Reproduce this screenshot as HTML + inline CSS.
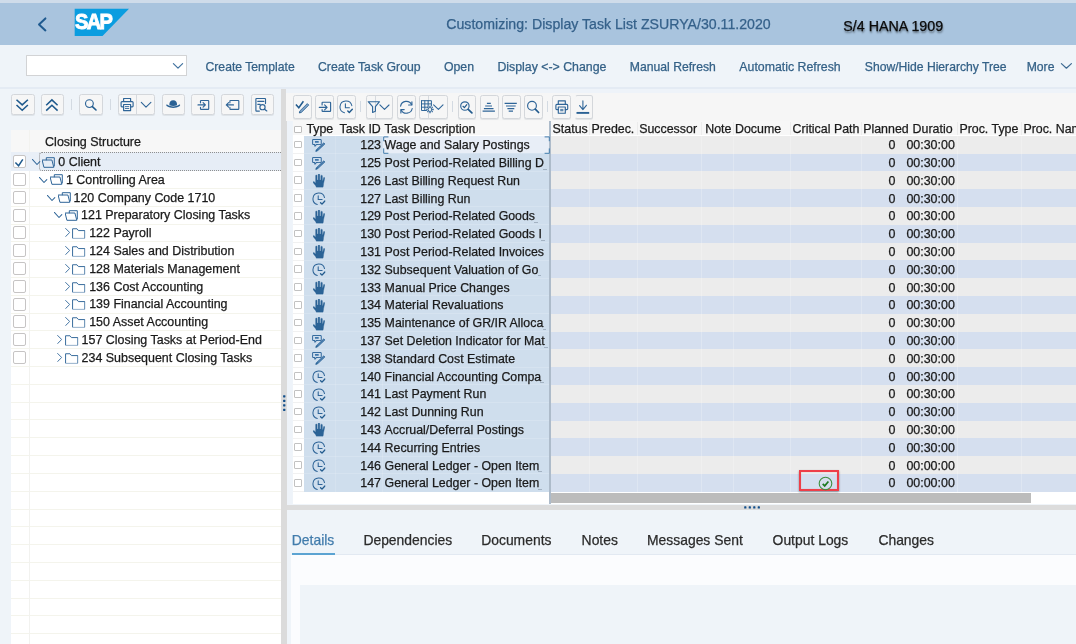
<!DOCTYPE html>
<html><head><meta charset="utf-8"><title>SAP</title>
<style>
html,body{margin:0;padding:0;overflow:hidden}
body{width:1076px;height:644px;overflow:hidden;position:relative;background:#eff4f9;font-family:"Liberation Sans",sans-serif;}
.b{position:absolute;display:block}
svg{overflow:visible}
.t{position:absolute;white-space:nowrap;line-height:20px;height:20px;-webkit-text-stroke:0.250px currentColor}
.btn{position:absolute;box-sizing:border-box;background:#f6f6f6;border:1px solid #d4d7db;border-radius:2.500px;box-shadow:0 1px 0 rgba(170,178,186,.25)}
.ic{fill:none;stroke:#2f6598;stroke-width:1.150;stroke-linecap:round;stroke-linejoin:round}
.if{fill:#2f6598;stroke:none}
#w{position:absolute;left:0;top:0;width:1076px;height:644px;overflow:hidden;will-change:transform}
</style></head><body><div id="w">
<svg width="0" height="0" style="position:absolute"><defs>
<linearGradient id="sapg" x1="0" y1="0" x2="0" y2="1"><stop offset="0" stop-color="#1aa6e4"/><stop offset="1" stop-color="#0d7fc9"/></linearGradient>
<symbol id="fopen" viewBox="0 0 13 11"><path class="ic" style="stroke-width:1;stroke-linejoin:miter" d="M4.300 2.900V0.700H12.300V9M0.500 3H9.900L11.800 10.300H2.300z"/></symbol>
<symbol id="fclosed" viewBox="0 0 14 11"><path class="ic" style="stroke-width:1;stroke-linejoin:miter" d="M0.600 10.400V0.700h4.600l1.500 1.900h6.700v7.800z"/></symbol>
<symbol id="chd" viewBox="0 0 9 6"><path class="ic" style="stroke-width:1.050" d="M0.300 0.300L5 5.500L7.800 2.600"/></symbol>
<symbol id="chr" viewBox="0 0 6 10"><path class="ic" style="stroke-width:1" d="M0.700 0.500l4.500 4.500-4.500 4.500"/></symbol>
<symbol id="clock" viewBox="0 0 14 14"><path class="ic" style="stroke-width:1.050" d="M12.870 5.750A6 6 0 1 0 5.450 12.800"/><path class="ic" style="stroke-width:1.100;stroke-linejoin:miter" d="M6.400 3.800V7.700H10.400"/><path class="ic" style="stroke-width:1.400;stroke:#215a8d" d="M8.800 11l1.500 1.500 3-3.300"/></symbol>
<symbol id="hand" viewBox="0 0 12 13.500"><path d="M2.600 9.200V1.700a0.750 0.750 0 0 1 1.500 0V6H5.100V0.800a0.850 0.850 0 0 1 1.700 0V6H7.800V2a0.800 0.800 0 0 1 1.600 0V6.400L9.900 6.600L10.500 3.900a0.650 0.650 0 0 1 1.300 0.300L10.600 9.500C10.500 11.200 10.300 12.400 10 13.400H3.400C3.100 12.200 2.400 11.200 1.600 10.400L0.200 8.700C-0.300 7.900 0.600 7.100 1.300 7.700z" fill="#2b6396" stroke="#2b6396" stroke-width="0.300" stroke-linejoin="round"/></symbol>
<symbol id="cpen" viewBox="0 0 14 13"><path class="ic" style="stroke-width:1.050;stroke:#366c9f" d="M6.600 5.500H4.600L3 7.400L2.700 5.500H1.400c-0.500 0-0.800-0.300-0.800-0.800V1.300c0-0.500 0.300-0.800 0.800-0.800h7.200c0.500 0 0.800 0.300 0.800 0.800v3.400c0 0.500-0.300 0.800-0.800 0.800H7.600"/><path d="M3 2.100h3.800v1.600H3z" fill="#3f76aa"/><path d="M12 3.900l1.100 1.200-7.600 7-1.700 0.600 0.500-1.700z" fill="#3a73a8" stroke="#2b6396" stroke-width="0.700" stroke-linejoin="round"/><path d="M11.600 5.400L5.700 10.900" fill="none" stroke="#c9d9ea" stroke-width="0.550" stroke-dasharray="0.700 0.900"/><path d="M3.700 12.800l0.450-1.500 1.050 1.050z" fill="#1f5a8d"/></symbol>
</defs></svg>
<div class="b" style="left:0.00px;top:0.00px;width:1076.00px;height:3.00px;background:#cfdcea;"></div>
<div class="b" style="left:0.00px;top:3.00px;width:1076.00px;height:42.00px;background:#a9c4de;"></div>
<svg class="b" style="left:34.00px;top:14.00px;" width="16" height="20" viewBox="0 0 16 20"><path d="M11.4 4.400L5 10.400l6.400 6" fill="none" stroke="#1f5a8f" stroke-width="2" stroke-linecap="round" stroke-linejoin="round"/></svg>
<svg class="b" style="left:74.00px;top:8.00px;" width="56" height="29" viewBox="0 0 56 29"><path d="M0.700 0.700H55L28.500 27.900H0.700z" fill="#0a9de0"/><text transform="translate(0.900 21.100) scale(0.900 1)" font-family="Liberation Sans" font-weight="bold" font-size="22.300" fill="#fff" stroke="#fff" stroke-width="0.900" style="letter-spacing:-1.800px">SAP</text></svg>
<div class="t" style="left:446.30px;top:14.10px;font-size:14.15px;color:#35618a;">Customizing: Display Task List ZSURYA/30.11.2020</div>
<div class="t" style="left:843.30px;top:15.60px;font-size:14.25px;color:#0a0a0a;text-shadow:0.500px 1.500px 2px rgba(0,0,0,.45)">S/4 HANA 1909</div>
<div class="b" style="left:26.300px;top:55.200px;width:158.400px;height:18.800px;background:#fff;border:1px solid #d2d3d5;border-radius:0.500px"></div>
<svg class="b" style="left:171.60px;top:61.30px;" width="12" height="10" viewBox="0 0 12 10"><path class="ic" style="stroke-width:1.200;stroke:#41729f" d="M1.400 2.600l4.600 4.600 4.600-4.600"/></svg>
<div class="t" style="left:205.50px;top:57.20px;font-size:12.2px;color:#346187;">Create Template</div>
<div class="t" style="left:318.00px;top:57.20px;font-size:12.25px;color:#346187;">Create Task Group</div>
<div class="t" style="left:443.90px;top:57.20px;font-size:12.3px;color:#346187;">Open</div>
<div class="t" style="left:497.40px;top:57.20px;font-size:12.33px;color:#346187;">Display &lt;-&gt; Change</div>
<div class="t" style="left:629.80px;top:57.20px;font-size:12.2px;color:#346187;">Manual Refresh</div>
<div class="t" style="left:739.30px;top:57.20px;font-size:12.33px;color:#346187;">Automatic Refresh</div>
<div class="t" style="left:864.80px;top:57.20px;font-size:12.15px;color:#346187;">Show/Hide Hierarchy Tree</div>
<div class="t" style="left:1026.70px;top:57.20px;font-size:12.2px;color:#346187;">More</div>
<svg class="b" style="left:1060.00px;top:61.00px;" width="13" height="10" viewBox="0 0 13 10"><path class="ic" style="stroke-width:1.2;stroke:#3e6a92" d="M1.400 2.600l5 4.600 5-4.600"/></svg>
<div class="b" style="left:0.00px;top:87.00px;width:1076.00px;height:1.50px;background:#e4ebf4;"></div>
<div class="btn" style="left:10.90px;top:94.20px;width:23.70px;height:21.20px;"></div>
<div class="btn" style="left:40.60px;top:94.20px;width:23.80px;height:21.20px;"></div>
<div class="btn" style="left:79.20px;top:94.20px;width:23.60px;height:21.20px;"></div>
<div class="btn" style="left:118.10px;top:94.20px;width:37.20px;height:21.20px;"></div>
<div class="btn" style="left:161.80px;top:94.20px;width:23.40px;height:21.20px;"></div>
<div class="btn" style="left:191.20px;top:94.20px;width:23.60px;height:21.20px;"></div>
<div class="btn" style="left:220.90px;top:94.20px;width:23.50px;height:21.20px;"></div>
<div class="btn" style="left:250.80px;top:94.20px;width:23.70px;height:21.20px;"></div>
<div class="b" style="left:136.20px;top:95.20px;width:1.00px;height:19.20px;background:#d5d9de;"></div>
<div class="b" style="left:71.30px;top:99.20px;width:1.00px;height:11.00px;background:#d3dae2;"></div>
<div class="b" style="left:110.30px;top:99.20px;width:1.00px;height:11.00px;background:#d3dae2;"></div>
<svg class="b" style="left:8px;top:92px" width="272" height="28" viewBox="8 92 272 28"><path class="ic" style="stroke-width:1.550;stroke:#1f5a8d;stroke-linecap:butt;stroke-linejoin:miter" d="M16.500 99.700L22.200 104.900L27.900 99.700M16.500 105L22.200 110.300L27.900 105"/><path class="ic" style="stroke-width:1.550;stroke:#1f5a8d;stroke-linecap:butt;stroke-linejoin:miter" d="M46.200 105.300L51.900 99.900L57.600 105.300M46.200 110.600L51.900 105.200L57.600 110.600"/><circle class="ic" cx="89.400" cy="103.600" r="3.900"/><path class="ic" style="stroke-width:1.600;stroke:#1f5a8d" d="M92.400 106.600L96 110"/><path class="ic" d="M123.600 101.600V98.500H130.600V101.600M123.600 106.900H122Q121.100 106.900 121.100 106V102.600Q121.100 101.600 122 101.600H132.200Q133.100 101.600 133.100 102.600V106Q133.100 106.900 132.200 106.900H130.600"/><path class="ic" d="M123.600 104.500H130.600V110.600H123.600z"/><path class="ic" style="stroke-width:0.900" d="M125.400 106.600H128.800M125.400 108.500H128.800"/><path class="ic" style="stroke-width:1.100" d="M141.300 102.400L146 107.200L150.900 102.400"/><path class="if" style="fill:#2a6194" d="M169.400 105.300C169.100 101.800 170.700 100.200 173.200 100.200S177.300 101.800 177 105.300C174.600 106.200 171.800 106.200 169.400 105.300z"/><path class="if" style="fill:#2a6194" d="M166.300 104.800C166.500 104.300 167.100 104.400 167.400 104.700C170.900 107 175.500 107 179 104.700C179.300 104.400 179.900 104.300 180.100 104.800C180.300 105.400 179.900 105.900 179.400 106.300C175.600 108.600 170.800 108.600 167 106.300C166.500 105.900 166.100 105.400 166.300 104.800z"/><path class="ic" d="M200.500 102.800V101.100Q200.500 100.500 201.100 100.500H208.100Q208.700 100.500 208.700 101.100V108.800Q208.700 109.400 208.100 109.400H201.100Q200.500 109.400 200.500 108.800V107.200"/><path class="ic" d="M198 104.900H205.300M203.100 102.600L205.400 104.900L203.100 107.200"/><path class="ic" d="M229.900 102.800V101.100Q229.900 100.500 230.500 100.500H238.200Q238.800 100.500 238.800 101.100V108.800Q238.800 109.400 238.200 109.400H230.500Q229.900 109.400 229.900 108.800V107.200"/><path class="ic" d="M226.300 104.900H233.500M228.600 102.600L226.300 104.900L228.600 107.200"/><path class="ic" d="M259.400 111.100H256.500Q255.900 111.100 255.900 110.500V99.100Q255.900 98.500 256.500 98.500H264.900Q265.500 98.500 265.500 99.100V103.600M257.800 101.400H263.800M257.800 104.300H260.200"/><circle class="ic" cx="262.500" cy="107.200" r="2.600"/><path class="ic" style="stroke-width:1.300" d="M264.500 109.200L266.800 110.900"/></svg>
<div class="b" style="left:11.00px;top:130.40px;width:270.00px;height:513.60px;background:#fff;"></div>
<div class="b" style="left:11.00px;top:130.40px;width:270.00px;height:22.35px;background:#f7f7f7;"></div>
<div class="t" style="left:45.10px;top:132.30px;font-size:12.5px;color:#1a1a1a;">Closing Structure</div>
<div class="b" style="left:11.00px;top:152.25px;width:270.00px;height:1.00px;background:#ebebeb;"></div>
<div class="b" style="left:11.00px;top:170.06px;width:270.00px;height:1.00px;background:#ebebeb;"></div>
<div class="b" style="left:11.00px;top:187.88px;width:270.00px;height:1.00px;background:#f4f4ec;"></div>
<div class="b" style="left:11.00px;top:205.69px;width:270.00px;height:1.00px;background:#f4f4ec;"></div>
<div class="b" style="left:11.00px;top:223.51px;width:270.00px;height:1.00px;background:#f4f4ec;"></div>
<div class="b" style="left:11.00px;top:241.32px;width:270.00px;height:1.00px;background:#f4f4ec;"></div>
<div class="b" style="left:11.00px;top:259.14px;width:270.00px;height:1.00px;background:#f4f4ec;"></div>
<div class="b" style="left:11.00px;top:276.96px;width:270.00px;height:1.00px;background:#f4f4ec;"></div>
<div class="b" style="left:11.00px;top:294.77px;width:270.00px;height:1.00px;background:#f4f4ec;"></div>
<div class="b" style="left:11.00px;top:312.59px;width:270.00px;height:1.00px;background:#f4f4ec;"></div>
<div class="b" style="left:11.00px;top:330.40px;width:270.00px;height:1.00px;background:#f4f4ec;"></div>
<div class="b" style="left:11.00px;top:348.22px;width:270.00px;height:1.00px;background:#f4f4ec;"></div>
<div class="b" style="left:11.00px;top:366.03px;width:270.00px;height:1.00px;background:#f4f4ec;"></div>
<div class="b" style="left:11.00px;top:383.85px;width:270.00px;height:1.00px;background:#f4f4ec;"></div>
<div class="b" style="left:11.00px;top:401.66px;width:270.00px;height:1.00px;background:#f4f4ec;"></div>
<div class="b" style="left:11.00px;top:419.48px;width:270.00px;height:1.00px;background:#f4f4ec;"></div>
<div class="b" style="left:11.00px;top:437.29px;width:270.00px;height:1.00px;background:#f4f4ec;"></div>
<div class="b" style="left:11.00px;top:455.11px;width:270.00px;height:1.00px;background:#f4f4ec;"></div>
<div class="b" style="left:11.00px;top:472.92px;width:270.00px;height:1.00px;background:#f4f4ec;"></div>
<div class="b" style="left:11.00px;top:490.74px;width:270.00px;height:1.00px;background:#f4f4ec;"></div>
<div class="b" style="left:11.00px;top:508.55px;width:270.00px;height:1.00px;background:#f4f4ec;"></div>
<div class="b" style="left:11.00px;top:526.37px;width:270.00px;height:1.00px;background:#f4f4ec;"></div>
<div class="b" style="left:11.00px;top:544.18px;width:270.00px;height:1.00px;background:#f4f4ec;"></div>
<div class="b" style="left:11.00px;top:562.00px;width:270.00px;height:1.00px;background:#f4f4ec;"></div>
<div class="b" style="left:11.00px;top:579.81px;width:270.00px;height:1.00px;background:#f4f4ec;"></div>
<div class="b" style="left:11.00px;top:597.62px;width:270.00px;height:1.00px;background:#f4f4ec;"></div>
<div class="b" style="left:11.00px;top:615.44px;width:270.00px;height:1.00px;background:#f4f4ec;"></div>
<div class="b" style="left:11.00px;top:633.26px;width:270.00px;height:1.00px;background:#f4f4ec;"></div>
<div class="b" style="left:29.00px;top:130.40px;width:1.00px;height:513.60px;background:#f2f2ef;"></div>
<div class="b" style="left:11.00px;top:152.25px;width:270.00px;height:18.62px;background:#e9eff7;"></div>
<div class="b" style="left:39.100px;top:152.35px;width:241.90px;height:18.52px;background:#e6edf6;border:1px dotted #8f8f8f;border-right:none;border-radius:3px 0 0 3px;box-sizing:border-box"></div>
<div class="b" style="left:12.800px;top:155.16px;width:10.800px;height:11px;background:#fff;border:1px solid #c6c4c4;border-radius:2px"></div>
<svg class="b" style="left:31.50px;top:158.96px" width="9" height="6" viewBox="0 0 9 6"><use href="#chd"/></svg>
<svg class="b" style="left:42.40px;top:156.56px" width="13" height="11" viewBox="0 0 13 11"><use href="#fopen"/></svg>
<div class="t" style="left:58.30px;top:151.95px;font-size:12.45px;color:#1a1a1a;">0 Client</div>
<div class="b" style="left:12.800px;top:172.97px;width:10.800px;height:11px;background:#fff;border:1px solid #c6c4c4;border-radius:2px"></div>
<svg class="b" style="left:39.10px;top:176.77px" width="9" height="6" viewBox="0 0 9 6"><use href="#chd"/></svg>
<svg class="b" style="left:50.00px;top:174.37px" width="13" height="11" viewBox="0 0 13 11"><use href="#fopen"/></svg>
<div class="t" style="left:65.90px;top:169.76px;font-size:12.45px;color:#1a1a1a;">1 Controlling Area</div>
<div class="b" style="left:12.800px;top:190.79px;width:10.800px;height:11px;background:#fff;border:1px solid #c6c4c4;border-radius:2px"></div>
<svg class="b" style="left:46.70px;top:194.59px" width="9" height="6" viewBox="0 0 9 6"><use href="#chd"/></svg>
<svg class="b" style="left:57.60px;top:192.19px" width="13" height="11" viewBox="0 0 13 11"><use href="#fopen"/></svg>
<div class="t" style="left:73.50px;top:187.58px;font-size:12.45px;color:#1a1a1a;">120 Company Code 1710</div>
<div class="b" style="left:12.800px;top:208.60px;width:10.800px;height:11px;background:#fff;border:1px solid #c6c4c4;border-radius:2px"></div>
<svg class="b" style="left:54.30px;top:212.40px" width="9" height="6" viewBox="0 0 9 6"><use href="#chd"/></svg>
<svg class="b" style="left:65.20px;top:210.00px" width="13" height="11" viewBox="0 0 13 11"><use href="#fopen"/></svg>
<div class="t" style="left:81.10px;top:205.39px;font-size:12.45px;color:#1a1a1a;">121 Preparatory Closing Tasks</div>
<div class="b" style="left:12.800px;top:226.42px;width:10.800px;height:11px;background:#fff;border:1px solid #c6c4c4;border-radius:2px"></div>
<svg class="b" style="left:64.70px;top:228.42px" width="5.4" height="9" viewBox="0 0 6 10"><use href="#chr"/></svg>
<svg class="b" style="left:72.40px;top:228.12px" width="13.4" height="10.7" viewBox="0 0 14 11"><use href="#fclosed"/></svg>
<div class="t" style="left:89.20px;top:223.21px;font-size:12.45px;color:#1a1a1a;">122 Payroll</div>
<div class="b" style="left:12.800px;top:244.23px;width:10.800px;height:11px;background:#fff;border:1px solid #c6c4c4;border-radius:2px"></div>
<svg class="b" style="left:64.70px;top:246.23px" width="5.4" height="9" viewBox="0 0 6 10"><use href="#chr"/></svg>
<svg class="b" style="left:72.40px;top:245.93px" width="13.4" height="10.7" viewBox="0 0 14 11"><use href="#fclosed"/></svg>
<div class="t" style="left:89.20px;top:241.02px;font-size:12.45px;color:#1a1a1a;">124 Sales and Distribution</div>
<div class="b" style="left:12.800px;top:262.05px;width:10.800px;height:11px;background:#fff;border:1px solid #c6c4c4;border-radius:2px"></div>
<svg class="b" style="left:64.70px;top:264.05px" width="5.4" height="9" viewBox="0 0 6 10"><use href="#chr"/></svg>
<svg class="b" style="left:72.40px;top:263.75px" width="13.4" height="10.7" viewBox="0 0 14 11"><use href="#fclosed"/></svg>
<div class="t" style="left:89.20px;top:258.84px;font-size:12.45px;color:#1a1a1a;">128 Materials Management</div>
<div class="b" style="left:12.800px;top:279.86px;width:10.800px;height:11px;background:#fff;border:1px solid #c6c4c4;border-radius:2px"></div>
<svg class="b" style="left:64.70px;top:281.86px" width="5.4" height="9" viewBox="0 0 6 10"><use href="#chr"/></svg>
<svg class="b" style="left:72.40px;top:281.56px" width="13.4" height="10.7" viewBox="0 0 14 11"><use href="#fclosed"/></svg>
<div class="t" style="left:89.20px;top:276.66px;font-size:12.45px;color:#1a1a1a;">136 Cost Accounting</div>
<div class="b" style="left:12.800px;top:297.68px;width:10.800px;height:11px;background:#fff;border:1px solid #c6c4c4;border-radius:2px"></div>
<svg class="b" style="left:64.70px;top:299.68px" width="5.4" height="9" viewBox="0 0 6 10"><use href="#chr"/></svg>
<svg class="b" style="left:72.40px;top:299.38px" width="13.4" height="10.7" viewBox="0 0 14 11"><use href="#fclosed"/></svg>
<div class="t" style="left:89.20px;top:294.47px;font-size:12.45px;color:#1a1a1a;">139 Financial Accounting</div>
<div class="b" style="left:12.800px;top:315.49px;width:10.800px;height:11px;background:#fff;border:1px solid #c6c4c4;border-radius:2px"></div>
<svg class="b" style="left:64.70px;top:317.49px" width="5.4" height="9" viewBox="0 0 6 10"><use href="#chr"/></svg>
<svg class="b" style="left:72.40px;top:317.19px" width="13.4" height="10.7" viewBox="0 0 14 11"><use href="#fclosed"/></svg>
<div class="t" style="left:89.20px;top:312.29px;font-size:12.45px;color:#1a1a1a;">150 Asset Accounting</div>
<div class="b" style="left:12.800px;top:333.31px;width:10.800px;height:11px;background:#fff;border:1px solid #c6c4c4;border-radius:2px"></div>
<svg class="b" style="left:57.10px;top:335.31px" width="5.4" height="9" viewBox="0 0 6 10"><use href="#chr"/></svg>
<svg class="b" style="left:64.80px;top:335.01px" width="13.4" height="10.7" viewBox="0 0 14 11"><use href="#fclosed"/></svg>
<div class="t" style="left:81.60px;top:330.10px;font-size:12.45px;color:#1a1a1a;">157 Closing Tasks at Period-End</div>
<div class="b" style="left:12.800px;top:351.12px;width:10.800px;height:11px;background:#fff;border:1px solid #c6c4c4;border-radius:2px"></div>
<svg class="b" style="left:57.10px;top:353.12px" width="5.4" height="9" viewBox="0 0 6 10"><use href="#chr"/></svg>
<svg class="b" style="left:64.80px;top:352.82px" width="13.4" height="10.7" viewBox="0 0 14 11"><use href="#fclosed"/></svg>
<div class="t" style="left:81.60px;top:347.92px;font-size:12.45px;color:#1a1a1a;">234 Subsequent Closing Tasks</div>
<svg class="b" style="left:12.00px;top:155.00px;" width="14" height="14" viewBox="0 0 14 14"><path d="M3.400 7.400l3.200 3.300 4.200-6.400" fill="none" stroke="#1f5a8d" stroke-width="1.500" stroke-linecap="butt" stroke-linejoin="miter"/></svg>
<div class="b" style="left:281.30px;top:88.50px;width:5.40px;height:555.50px;background:#dbdbdb;"></div>
<svg class="b" style="left:281.00px;top:392.00px;" width="6" height="22" viewBox="281 392 6 22"><rect x="283.100" y="395.20" width="2.300" height="2.200" rx="0.400" fill="#124f8b"/><rect x="283.100" y="399.70" width="2.300" height="2.200" rx="0.400" fill="#124f8b"/><rect x="283.100" y="404.20" width="2.300" height="2.200" rx="0.400" fill="#124f8b"/><rect x="283.100" y="408.70" width="2.300" height="2.200" rx="0.400" fill="#124f8b"/></svg>
<div class="b" style="left:286.30px;top:88.50px;width:789.70px;height:4.50px;background:#eef3f9;"></div>
<div class="b" style="left:286.30px;top:93.00px;width:789.70px;height:28.30px;background:#f6f6f6;"></div>
<div class="btn" style="left:293.20px;top:94.80px;width:18.50px;height:24.00px;"></div>
<div class="btn" style="left:315.20px;top:94.80px;width:18.60px;height:24.00px;"></div>
<div class="btn" style="left:337.10px;top:94.80px;width:19.00px;height:24.00px;"></div>
<div class="btn" style="left:365.90px;top:94.80px;width:27.60px;height:24.00px;"></div>
<div class="btn" style="left:397.00px;top:94.80px;width:19.00px;height:24.00px;"></div>
<div class="btn" style="left:419.30px;top:94.80px;width:28.30px;height:24.00px;"></div>
<div class="btn" style="left:457.50px;top:94.80px;width:18.60px;height:24.00px;"></div>
<div class="btn" style="left:479.60px;top:94.80px;width:19.00px;height:24.00px;"></div>
<div class="btn" style="left:501.90px;top:94.80px;width:18.80px;height:24.00px;"></div>
<div class="btn" style="left:524.20px;top:94.80px;width:18.60px;height:24.00px;"></div>
<div class="btn" style="left:552.30px;top:94.80px;width:18.90px;height:24.00px;"></div>
<div class="btn" style="left:574.90px;top:94.80px;width:18.60px;height:24.00px;border-left-color:transparent"></div>
<div class="b" style="left:375.20px;top:95.80px;width:1.00px;height:22.00px;background:#d5d9de;"></div>
<div class="b" style="left:428.10px;top:95.80px;width:1.00px;height:22.00px;background:#d5d9de;"></div>
<div class="b" style="left:360.30px;top:101.00px;width:1.00px;height:11.00px;background:#d3dae2;"></div>
<div class="b" style="left:452.00px;top:101.00px;width:1.00px;height:11.00px;background:#d3dae2;"></div>
<div class="b" style="left:547.10px;top:101.00px;width:1.00px;height:11.00px;background:#d3dae2;"></div>
<svg class="b" style="left:286px;top:93px" width="320" height="30" viewBox="286 93 320 30"><path class="ic" style="stroke-width:1.500;stroke:#215a8d;stroke-linecap:butt;stroke-linejoin:miter" d="M295.900 104.400l2.900 3.300 4.600-6.500"/><path d="M307.300 103.600l1.500 1.500-7.400 7.300-2.100 0.600 0.600-2.100z" fill="#7fa3c6" stroke="#2a6194" stroke-width="0.800" stroke-linejoin="round"/><path d="M299.300 113l0.400-1.400 1 1z" fill="#215a8d"/><path class="ic" d="M322.100 105V102.800q0-0.600 0.600-0.600H330q0.600 0 0.600 0.600V110.800q0 0.600-0.600 0.600H322.700q-0.600 0-0.600-0.600V109.600"/><path class="ic" d="M319.300 107.400H327M324.600 104.900L327.100 107.400L324.600 109.900"/><svg x="339" y="100" width="14" height="14" viewBox="0 0 14 14"><use href="#clock"/></svg><path class="ic" d="M368.200 101.700H379.500L375.400 106.600V111.300L372.600 112.500V106.600z"/><path class="ic" style="stroke-width:1.100" d="M379.900 104.800L384.500 109.400L389 105"/><path class="ic" d="M400.600 106.100A5.900 5.900 0 0 1 411.700 104.700M412.200 108.500A5.900 5.900 0 0 1 401.100 109.900"/><path class="ic" d="M411.900 101.700V105H408.600M400.900 112.900V109.600H404.200"/><path class="ic" style="stroke-width:1" d="M421.500 100.700H431.400V106M421.500 100.700V110.500H426.500M421.500 103.900H431.400M421.500 107.200H427.500M424.800 100.700V110.500M428.100 100.700V106.400"/><circle class="ic" style="stroke-width:1" cx="430" cy="109.500" r="2"/><path class="ic" style="stroke-width:1.300;stroke-linecap:butt" d="M430 105.800V107M430 112V113.200M426.300 109.500H427.500M432.500 109.500H433.700M427.400 106.900L428.200 107.700M431.800 111.300L432.600 112.100M432.600 106.900L431.800 107.700M428.200 111.300L427.400 112.100"/><path class="ic" style="stroke-width:1.100" d="M433.600 104.900L438.400 109.400L443 104.900"/><circle class="ic" cx="464.900" cy="106" r="4.200"/><path class="ic" style="stroke-width:1.700;stroke:#215a8d" d="M468.200 109.300L471.900 112.800"/><path class="ic" style="stroke-width:1.200;stroke:#215a8d" d="M463 106.300L464.400 107.600L466.800 104.600"/><path class="ic" style="stroke-width:1.200;stroke-linecap:butt" d="M486.900 103.400H490.800M485.200 106H492M483.900 108.600H493.500M482.600 111.100H494.900"/><path class="ic" style="stroke-width:1.200;stroke-linecap:butt" d="M504.600 103.400H516.800M506 106H515.700M507.400 108.600H514.300M508.700 111.100H513"/><circle class="ic" cx="532" cy="105.800" r="4.400"/><path class="ic" style="stroke-width:1.700;stroke:#215a8d" d="M535.300 109.200L538.600 112.500"/><path class="ic" d="M558.300 104.400V100.800H565.300V104.400M558.300 109.600H556.800Q555.900 109.600 555.900 108.700V105.400Q555.900 104.400 556.800 104.400H566.800Q567.700 104.400 567.700 105.400V108.700Q567.700 109.600 566.800 109.600H565.300"/><path class="ic" d="M558.300 107H565.300V113.200H558.300z"/><path class="if" d="M560.200 108.900H563.400V111.300H560.200z" opacity=".75"/><path class="ic" style="stroke-width:1.100" d="M582.900 100.900V109.600M579.600 105.700L582.900 109.700L586.400 105.300"/><path d="M576.500 112.900H589.200" stroke="#2a6194" stroke-width="1.900" fill="none"/></svg>
<div class="b" style="left:286.70px;top:121.30px;width:5.80px;height:388.70px;background:#eef3f9;"></div>
<div class="b" style="left:292.50px;top:121.30px;width:783.50px;height:383.20px;background:#fff;"></div>
<div class="b" style="left:292.50px;top:121.30px;width:783.50px;height:14.10px;background:#f7f7f7;"></div>
<div class="b" style="left:294.300px;top:125.600px;width:5.600px;height:5.600px;background:#fff;border:1px solid #bdbdbd;border-radius:1px"></div>
<div class="b" style="left:303.60px;top:136.00px;width:246.00px;height:18.00px;background:#cfdeed;"></div>
<div class="b" style="left:549.60px;top:136.00px;width:526.40px;height:18.00px;background:#ececec;"></div>
<div class="b" style="left:294.300px;top:140.82px;width:5.600px;height:5.600px;background:#fff;border:1px solid #c2c2c2;border-radius:1px"></div>
<svg class="b" style="left:311.70px;top:138.82px" width="13.8" height="12.8" viewBox="0 0 14 13"><use href="#cpen"/></svg>
<div class="t" style="right:695.00px;top:135.12px;font-size:12.45px;color:#1a1a1a;">123</div>
<div class="t" style="left:384.60px;top:135.12px;font-size:12.36px;color:#1a1a1a;">Wage and Salary Postings</div>
<div class="t" style="right:180.60px;top:135.12px;font-size:12.45px;color:#1a1a1a;">0</div>
<div class="t" style="left:906.40px;top:135.12px;font-size:12.45px;color:#1a1a1a;">00:30:00</div>
<div class="b" style="left:303.60px;top:154.00px;width:246.00px;height:17.00px;background:#cfdeed;"></div>
<div class="b" style="left:549.60px;top:154.00px;width:526.40px;height:17.00px;background:#d5dfef;"></div>
<div class="b" style="left:294.300px;top:158.62px;width:5.600px;height:5.600px;background:#fff;border:1px solid #c2c2c2;border-radius:1px"></div>
<svg class="b" style="left:311.70px;top:156.62px" width="13.8" height="12.8" viewBox="0 0 14 13"><use href="#cpen"/></svg>
<div class="t" style="right:695.00px;top:152.92px;font-size:12.45px;color:#1a1a1a;">125</div>
<div class="t" style="left:384.60px;top:152.92px;font-size:12.36px;color:#1a1a1a;">Post Period-Related Billing D<span style="display:inline-block;width:3.800px;height:1px;background:#a3b2c2;margin-left:-0.800px;position:relative;top:2.600px"></span></div>
<div class="t" style="right:180.60px;top:152.92px;font-size:12.45px;color:#1a1a1a;">0</div>
<div class="t" style="left:906.40px;top:152.92px;font-size:12.45px;color:#1a1a1a;">00:30:00</div>
<div class="b" style="left:303.60px;top:171.00px;width:246.00px;height:18.00px;background:#cfdeed;"></div>
<div class="b" style="left:549.60px;top:171.00px;width:526.40px;height:18.00px;background:#ececec;"></div>
<div class="b" style="left:294.300px;top:176.43px;width:5.600px;height:5.600px;background:#fff;border:1px solid #c2c2c2;border-radius:1px"></div>
<svg class="b" style="left:312.90px;top:174.13px" width="12" height="13.5" viewBox="0 0 12 13.500"><use href="#hand"/></svg>
<div class="t" style="right:695.00px;top:170.72px;font-size:12.45px;color:#1a1a1a;">126</div>
<div class="t" style="left:384.60px;top:170.72px;font-size:12.36px;color:#1a1a1a;">Last Billing Request Run</div>
<div class="t" style="right:180.60px;top:170.72px;font-size:12.45px;color:#1a1a1a;">0</div>
<div class="t" style="left:906.40px;top:170.72px;font-size:12.45px;color:#1a1a1a;">00:30:00</div>
<div class="b" style="left:303.60px;top:189.00px;width:246.00px;height:18.00px;background:#cfdeed;"></div>
<div class="b" style="left:549.60px;top:189.00px;width:526.40px;height:18.00px;background:#d5dfef;"></div>
<div class="b" style="left:294.300px;top:194.23px;width:5.600px;height:5.600px;background:#fff;border:1px solid #c2c2c2;border-radius:1px"></div>
<svg class="b" style="left:311.70px;top:192.03px" width="13.6" height="13.6" viewBox="0 0 14 14"><use href="#clock"/></svg>
<div class="t" style="right:695.00px;top:188.53px;font-size:12.45px;color:#1a1a1a;">127</div>
<div class="t" style="left:384.60px;top:188.53px;font-size:12.36px;color:#1a1a1a;">Last Billing Run</div>
<div class="t" style="right:180.60px;top:188.53px;font-size:12.45px;color:#1a1a1a;">0</div>
<div class="t" style="left:906.40px;top:188.53px;font-size:12.45px;color:#1a1a1a;">00:30:00</div>
<div class="b" style="left:303.60px;top:207.00px;width:246.00px;height:18.00px;background:#cfdeed;"></div>
<div class="b" style="left:549.60px;top:207.00px;width:526.40px;height:18.00px;background:#ececec;"></div>
<div class="b" style="left:294.300px;top:212.03px;width:5.600px;height:5.600px;background:#fff;border:1px solid #c2c2c2;border-radius:1px"></div>
<svg class="b" style="left:312.90px;top:209.73px" width="12" height="13.5" viewBox="0 0 12 13.500"><use href="#hand"/></svg>
<div class="t" style="right:695.00px;top:206.33px;font-size:12.45px;color:#1a1a1a;">129</div>
<div class="t" style="left:384.60px;top:206.33px;font-size:12.36px;color:#1a1a1a;">Post Period-Related Goods<span style="display:inline-block;width:3.800px;height:1px;background:#a3b2c2;margin-left:-0.800px;position:relative;top:2.600px"></span></div>
<div class="t" style="right:180.60px;top:206.33px;font-size:12.45px;color:#1a1a1a;">0</div>
<div class="t" style="left:906.40px;top:206.33px;font-size:12.45px;color:#1a1a1a;">00:30:00</div>
<div class="b" style="left:303.60px;top:225.00px;width:246.00px;height:18.00px;background:#cfdeed;"></div>
<div class="b" style="left:549.60px;top:225.00px;width:526.40px;height:18.00px;background:#d5dfef;"></div>
<div class="b" style="left:294.300px;top:229.83px;width:5.600px;height:5.600px;background:#fff;border:1px solid #c2c2c2;border-radius:1px"></div>
<svg class="b" style="left:312.90px;top:227.53px" width="12" height="13.5" viewBox="0 0 12 13.500"><use href="#hand"/></svg>
<div class="t" style="right:695.00px;top:224.13px;font-size:12.45px;color:#1a1a1a;">130</div>
<div class="t" style="left:384.60px;top:224.13px;font-size:12.36px;color:#1a1a1a;">Post Period-Related Goods I<span style="display:inline-block;width:3.800px;height:1px;background:#a3b2c2;margin-left:-0.800px;position:relative;top:2.600px"></span></div>
<div class="t" style="right:180.60px;top:224.13px;font-size:12.45px;color:#1a1a1a;">0</div>
<div class="t" style="left:906.40px;top:224.13px;font-size:12.45px;color:#1a1a1a;">00:30:00</div>
<div class="b" style="left:303.60px;top:243.00px;width:246.00px;height:17.00px;background:#cfdeed;"></div>
<div class="b" style="left:549.60px;top:243.00px;width:526.40px;height:17.00px;background:#ececec;"></div>
<div class="b" style="left:294.300px;top:247.63px;width:5.600px;height:5.600px;background:#fff;border:1px solid #c2c2c2;border-radius:1px"></div>
<svg class="b" style="left:312.90px;top:245.33px" width="12" height="13.5" viewBox="0 0 12 13.500"><use href="#hand"/></svg>
<div class="t" style="right:695.00px;top:241.93px;font-size:12.45px;color:#1a1a1a;">131</div>
<div class="t" style="left:384.60px;top:241.93px;font-size:12.36px;color:#1a1a1a;">Post Period-Related Invoices</div>
<div class="t" style="right:180.60px;top:241.93px;font-size:12.45px;color:#1a1a1a;">0</div>
<div class="t" style="left:906.40px;top:241.93px;font-size:12.45px;color:#1a1a1a;">00:30:00</div>
<div class="b" style="left:303.60px;top:260.00px;width:246.00px;height:18.00px;background:#cfdeed;"></div>
<div class="b" style="left:549.60px;top:260.00px;width:526.40px;height:18.00px;background:#d5dfef;"></div>
<div class="b" style="left:294.300px;top:265.44px;width:5.600px;height:5.600px;background:#fff;border:1px solid #c2c2c2;border-radius:1px"></div>
<svg class="b" style="left:311.70px;top:263.24px" width="13.6" height="13.6" viewBox="0 0 14 14"><use href="#clock"/></svg>
<div class="t" style="right:695.00px;top:259.73px;font-size:12.45px;color:#1a1a1a;">132</div>
<div class="t" style="left:384.60px;top:259.73px;font-size:12.36px;color:#1a1a1a;">Subsequent Valuation of Go<span style="display:inline-block;width:3.800px;height:1px;background:#a3b2c2;margin-left:-0.800px;position:relative;top:2.600px"></span></div>
<div class="t" style="right:180.60px;top:259.73px;font-size:12.45px;color:#1a1a1a;">0</div>
<div class="t" style="left:906.40px;top:259.73px;font-size:12.45px;color:#1a1a1a;">00:30:00</div>
<div class="b" style="left:303.60px;top:278.00px;width:246.00px;height:18.00px;background:#cfdeed;"></div>
<div class="b" style="left:549.60px;top:278.00px;width:526.40px;height:18.00px;background:#ececec;"></div>
<div class="b" style="left:294.300px;top:283.24px;width:5.600px;height:5.600px;background:#fff;border:1px solid #c2c2c2;border-radius:1px"></div>
<svg class="b" style="left:312.90px;top:280.94px" width="12" height="13.5" viewBox="0 0 12 13.500"><use href="#hand"/></svg>
<div class="t" style="right:695.00px;top:277.54px;font-size:12.45px;color:#1a1a1a;">133</div>
<div class="t" style="left:384.60px;top:277.54px;font-size:12.36px;color:#1a1a1a;">Manual Price Changes</div>
<div class="t" style="right:180.60px;top:277.54px;font-size:12.45px;color:#1a1a1a;">0</div>
<div class="t" style="left:906.40px;top:277.54px;font-size:12.45px;color:#1a1a1a;">00:30:00</div>
<div class="b" style="left:303.60px;top:296.00px;width:246.00px;height:18.00px;background:#cfdeed;"></div>
<div class="b" style="left:549.60px;top:296.00px;width:526.40px;height:18.00px;background:#d5dfef;"></div>
<div class="b" style="left:294.300px;top:301.04px;width:5.600px;height:5.600px;background:#fff;border:1px solid #c2c2c2;border-radius:1px"></div>
<svg class="b" style="left:312.90px;top:298.74px" width="12" height="13.5" viewBox="0 0 12 13.500"><use href="#hand"/></svg>
<div class="t" style="right:695.00px;top:295.34px;font-size:12.45px;color:#1a1a1a;">134</div>
<div class="t" style="left:384.60px;top:295.34px;font-size:12.36px;color:#1a1a1a;">Material Revaluations</div>
<div class="t" style="right:180.60px;top:295.34px;font-size:12.45px;color:#1a1a1a;">0</div>
<div class="t" style="left:906.40px;top:295.34px;font-size:12.45px;color:#1a1a1a;">00:30:00</div>
<div class="b" style="left:303.60px;top:314.00px;width:246.00px;height:18.00px;background:#cfdeed;"></div>
<div class="b" style="left:549.60px;top:314.00px;width:526.40px;height:18.00px;background:#ececec;"></div>
<div class="b" style="left:294.300px;top:318.84px;width:5.600px;height:5.600px;background:#fff;border:1px solid #c2c2c2;border-radius:1px"></div>
<svg class="b" style="left:312.90px;top:316.54px" width="12" height="13.5" viewBox="0 0 12 13.500"><use href="#hand"/></svg>
<div class="t" style="right:695.00px;top:313.14px;font-size:12.45px;color:#1a1a1a;">135</div>
<div class="t" style="left:384.60px;top:313.14px;font-size:12.36px;color:#1a1a1a;">Maintenance of GR/IR Alloca<span style="display:inline-block;width:3.800px;height:1px;background:#a3b2c2;margin-left:-0.800px;position:relative;top:2.600px"></span></div>
<div class="t" style="right:180.60px;top:313.14px;font-size:12.45px;color:#1a1a1a;">0</div>
<div class="t" style="left:906.40px;top:313.14px;font-size:12.45px;color:#1a1a1a;">00:30:00</div>
<div class="b" style="left:303.60px;top:332.00px;width:246.00px;height:17.00px;background:#cfdeed;"></div>
<div class="b" style="left:549.60px;top:332.00px;width:526.40px;height:17.00px;background:#d5dfef;"></div>
<div class="b" style="left:294.300px;top:336.64px;width:5.600px;height:5.600px;background:#fff;border:1px solid #c2c2c2;border-radius:1px"></div>
<svg class="b" style="left:311.70px;top:334.64px" width="13.8" height="12.8" viewBox="0 0 14 13"><use href="#cpen"/></svg>
<div class="t" style="right:695.00px;top:330.94px;font-size:12.45px;color:#1a1a1a;">137</div>
<div class="t" style="left:384.60px;top:330.94px;font-size:12.36px;color:#1a1a1a;">Set Deletion Indicator for Mat<span style="display:inline-block;width:3.800px;height:1px;background:#a3b2c2;margin-left:-0.800px;position:relative;top:2.600px"></span></div>
<div class="t" style="right:180.60px;top:330.94px;font-size:12.45px;color:#1a1a1a;">0</div>
<div class="t" style="left:906.40px;top:330.94px;font-size:12.45px;color:#1a1a1a;">00:30:00</div>
<div class="b" style="left:303.60px;top:349.00px;width:246.00px;height:18.00px;background:#cfdeed;"></div>
<div class="b" style="left:549.60px;top:349.00px;width:526.40px;height:18.00px;background:#ececec;"></div>
<div class="b" style="left:294.300px;top:354.44px;width:5.600px;height:5.600px;background:#fff;border:1px solid #c2c2c2;border-radius:1px"></div>
<svg class="b" style="left:311.70px;top:352.44px" width="13.8" height="12.8" viewBox="0 0 14 13"><use href="#cpen"/></svg>
<div class="t" style="right:695.00px;top:348.74px;font-size:12.45px;color:#1a1a1a;">138</div>
<div class="t" style="left:384.60px;top:348.74px;font-size:12.36px;color:#1a1a1a;">Standard Cost Estimate</div>
<div class="t" style="right:180.60px;top:348.74px;font-size:12.45px;color:#1a1a1a;">0</div>
<div class="t" style="left:906.40px;top:348.74px;font-size:12.45px;color:#1a1a1a;">00:30:00</div>
<div class="b" style="left:303.60px;top:367.00px;width:246.00px;height:18.00px;background:#cfdeed;"></div>
<div class="b" style="left:549.60px;top:367.00px;width:526.40px;height:18.00px;background:#d5dfef;"></div>
<div class="b" style="left:294.300px;top:372.25px;width:5.600px;height:5.600px;background:#fff;border:1px solid #c2c2c2;border-radius:1px"></div>
<svg class="b" style="left:311.70px;top:370.05px" width="13.6" height="13.6" viewBox="0 0 14 14"><use href="#clock"/></svg>
<div class="t" style="right:695.00px;top:366.55px;font-size:12.45px;color:#1a1a1a;">140</div>
<div class="t" style="left:384.60px;top:366.55px;font-size:12.36px;color:#1a1a1a;">Financial Accounting Compa<span style="display:inline-block;width:3.800px;height:1px;background:#a3b2c2;margin-left:-0.800px;position:relative;top:2.600px"></span></div>
<div class="t" style="right:180.60px;top:366.55px;font-size:12.45px;color:#1a1a1a;">0</div>
<div class="t" style="left:906.40px;top:366.55px;font-size:12.45px;color:#1a1a1a;">00:30:00</div>
<div class="b" style="left:303.60px;top:385.00px;width:246.00px;height:18.00px;background:#cfdeed;"></div>
<div class="b" style="left:549.60px;top:385.00px;width:526.40px;height:18.00px;background:#ececec;"></div>
<div class="b" style="left:294.300px;top:390.05px;width:5.600px;height:5.600px;background:#fff;border:1px solid #c2c2c2;border-radius:1px"></div>
<svg class="b" style="left:311.70px;top:387.85px" width="13.6" height="13.6" viewBox="0 0 14 14"><use href="#clock"/></svg>
<div class="t" style="right:695.00px;top:384.35px;font-size:12.45px;color:#1a1a1a;">141</div>
<div class="t" style="left:384.60px;top:384.35px;font-size:12.36px;color:#1a1a1a;">Last Payment Run</div>
<div class="t" style="right:180.60px;top:384.35px;font-size:12.45px;color:#1a1a1a;">0</div>
<div class="t" style="left:906.40px;top:384.35px;font-size:12.45px;color:#1a1a1a;">00:30:00</div>
<div class="b" style="left:303.60px;top:403.00px;width:246.00px;height:18.00px;background:#cfdeed;"></div>
<div class="b" style="left:549.60px;top:403.00px;width:526.40px;height:18.00px;background:#d5dfef;"></div>
<div class="b" style="left:294.300px;top:407.85px;width:5.600px;height:5.600px;background:#fff;border:1px solid #c2c2c2;border-radius:1px"></div>
<svg class="b" style="left:311.70px;top:405.65px" width="13.6" height="13.6" viewBox="0 0 14 14"><use href="#clock"/></svg>
<div class="t" style="right:695.00px;top:402.15px;font-size:12.45px;color:#1a1a1a;">142</div>
<div class="t" style="left:384.60px;top:402.15px;font-size:12.36px;color:#1a1a1a;">Last Dunning Run</div>
<div class="t" style="right:180.60px;top:402.15px;font-size:12.45px;color:#1a1a1a;">0</div>
<div class="t" style="left:906.40px;top:402.15px;font-size:12.45px;color:#1a1a1a;">00:30:00</div>
<div class="b" style="left:303.60px;top:421.00px;width:246.00px;height:17.00px;background:#cfdeed;"></div>
<div class="b" style="left:549.60px;top:421.00px;width:526.40px;height:17.00px;background:#ececec;"></div>
<div class="b" style="left:294.300px;top:425.65px;width:5.600px;height:5.600px;background:#fff;border:1px solid #c2c2c2;border-radius:1px"></div>
<svg class="b" style="left:312.90px;top:423.35px" width="12" height="13.5" viewBox="0 0 12 13.500"><use href="#hand"/></svg>
<div class="t" style="right:695.00px;top:419.95px;font-size:12.45px;color:#1a1a1a;">143</div>
<div class="t" style="left:384.60px;top:419.95px;font-size:12.36px;color:#1a1a1a;">Accrual/Deferral Postings</div>
<div class="t" style="right:180.60px;top:419.95px;font-size:12.45px;color:#1a1a1a;">0</div>
<div class="t" style="left:906.40px;top:419.95px;font-size:12.45px;color:#1a1a1a;">00:30:00</div>
<div class="b" style="left:303.60px;top:438.00px;width:246.00px;height:18.00px;background:#cfdeed;"></div>
<div class="b" style="left:549.60px;top:438.00px;width:526.40px;height:18.00px;background:#d5dfef;"></div>
<div class="b" style="left:294.300px;top:443.46px;width:5.600px;height:5.600px;background:#fff;border:1px solid #c2c2c2;border-radius:1px"></div>
<svg class="b" style="left:311.70px;top:441.26px" width="13.6" height="13.6" viewBox="0 0 14 14"><use href="#clock"/></svg>
<div class="t" style="right:695.00px;top:437.75px;font-size:12.45px;color:#1a1a1a;">144</div>
<div class="t" style="left:384.60px;top:437.75px;font-size:12.36px;color:#1a1a1a;">Recurring Entries</div>
<div class="t" style="right:180.60px;top:437.75px;font-size:12.45px;color:#1a1a1a;">0</div>
<div class="t" style="left:906.40px;top:437.75px;font-size:12.45px;color:#1a1a1a;">00:30:00</div>
<div class="b" style="left:303.60px;top:456.00px;width:246.00px;height:18.00px;background:#cfdeed;"></div>
<div class="b" style="left:549.60px;top:456.00px;width:526.40px;height:18.00px;background:#ececec;"></div>
<div class="b" style="left:294.300px;top:461.26px;width:5.600px;height:5.600px;background:#fff;border:1px solid #c2c2c2;border-radius:1px"></div>
<svg class="b" style="left:311.70px;top:459.06px" width="13.6" height="13.6" viewBox="0 0 14 14"><use href="#clock"/></svg>
<div class="t" style="right:695.00px;top:455.56px;font-size:12.45px;color:#1a1a1a;">146</div>
<div class="t" style="left:384.60px;top:455.56px;font-size:12.36px;color:#1a1a1a;">General Ledger - Open Item<span style="display:inline-block;width:3.800px;height:1px;background:#a3b2c2;margin-left:-0.800px;position:relative;top:2.600px"></span></div>
<div class="t" style="right:180.60px;top:455.56px;font-size:12.45px;color:#1a1a1a;">0</div>
<div class="t" style="left:906.40px;top:455.56px;font-size:12.45px;color:#1a1a1a;">00:00:00</div>
<div class="b" style="left:303.60px;top:474.00px;width:246.00px;height:18.00px;background:#cfdeed;"></div>
<div class="b" style="left:549.60px;top:474.00px;width:526.40px;height:18.00px;background:#d5dfef;"></div>
<div class="b" style="left:294.300px;top:479.06px;width:5.600px;height:5.600px;background:#fff;border:1px solid #c2c2c2;border-radius:1px"></div>
<svg class="b" style="left:311.70px;top:476.86px" width="13.6" height="13.6" viewBox="0 0 14 14"><use href="#clock"/></svg>
<div class="t" style="right:695.00px;top:473.36px;font-size:12.45px;color:#1a1a1a;">147</div>
<div class="t" style="left:384.60px;top:473.36px;font-size:12.36px;color:#1a1a1a;">General Ledger - Open Item<span style="display:inline-block;width:3.800px;height:1px;background:#a3b2c2;margin-left:-0.800px;position:relative;top:2.600px"></span></div>
<div class="t" style="right:180.60px;top:473.36px;font-size:12.45px;color:#1a1a1a;">0</div>
<div class="t" style="left:906.40px;top:473.36px;font-size:12.45px;color:#1a1a1a;">00:00:00</div>
<div class="t" style="left:306.40px;top:119.40px;font-size:12.4px;color:#1a1a1a;">Type</div>
<div class="t" style="left:339.50px;top:119.40px;font-size:12.4px;color:#1a1a1a;">Task ID</div>
<div class="t" style="left:384.60px;top:119.40px;font-size:12.4px;color:#1a1a1a;">Task Description</div>
<div class="t" style="left:552.60px;top:119.40px;font-size:12.4px;color:#1a1a1a;">Status</div>
<div class="t" style="left:591.60px;top:119.40px;font-size:12.4px;color:#1a1a1a;">Predec.</div>
<div class="t" style="left:639.20px;top:119.40px;font-size:12.4px;color:#1a1a1a;">Successor</div>
<div class="t" style="left:705.20px;top:119.40px;font-size:12.4px;color:#1a1a1a;">Note</div>
<div class="t" style="left:735.00px;top:119.40px;font-size:12.4px;color:#1a1a1a;">Docume</div>
<div class="t" style="left:792.60px;top:119.40px;font-size:12.4px;color:#1a1a1a;">Critical Path</div>
<div class="t" style="left:863.20px;top:119.40px;font-size:12.4px;color:#1a1a1a;">Planned</div>
<div class="t" style="left:912.60px;top:119.40px;font-size:12.4px;color:#1a1a1a;">Duratio</div>
<div class="t" style="left:959.40px;top:119.40px;font-size:12.4px;color:#1a1a1a;">Proc. Type</div>
<div class="t" style="left:1023.40px;top:119.40px;font-size:12.4px;color:#1a1a1a;">Proc. Nam</div>
<div class="b" style="left:589.00px;top:122.30px;width:1.00px;height:13.10px;background:#ececec;"></div>
<div class="b" style="left:636.90px;top:122.30px;width:1.00px;height:13.10px;background:#ececec;"></div>
<div class="b" style="left:701.20px;top:122.30px;width:1.00px;height:13.10px;background:#ececec;"></div>
<div class="b" style="left:733.10px;top:122.30px;width:1.00px;height:13.10px;background:#ececec;"></div>
<div class="b" style="left:789.50px;top:122.30px;width:1.00px;height:13.10px;background:#ececec;"></div>
<div class="b" style="left:860.50px;top:122.30px;width:1.00px;height:13.10px;background:#ececec;"></div>
<div class="b" style="left:956.90px;top:122.30px;width:1.00px;height:13.10px;background:#ececec;"></div>
<div class="b" style="left:1021.20px;top:122.30px;width:1.00px;height:13.10px;background:#ececec;"></div>
<div class="b" style="left:334.70px;top:135.72px;width:1.00px;height:356.04px;background:rgba(255,255,255,.14);"></div>
<div class="b" style="left:382.40px;top:135.72px;width:1.00px;height:356.04px;background:rgba(255,255,255,.14);"></div>
<div class="b" style="left:588.50px;top:135.72px;width:1.00px;height:356.04px;background:rgba(255,255,255,.22);"></div>
<div class="b" style="left:636.90px;top:135.72px;width:1.00px;height:356.04px;background:rgba(255,255,255,.22);"></div>
<div class="b" style="left:701.20px;top:135.72px;width:1.00px;height:356.04px;background:rgba(255,255,255,.22);"></div>
<div class="b" style="left:733.10px;top:135.72px;width:1.00px;height:356.04px;background:rgba(255,255,255,.22);"></div>
<div class="b" style="left:789.50px;top:135.72px;width:1.00px;height:356.04px;background:rgba(255,255,255,.22);"></div>
<div class="b" style="left:860.50px;top:135.72px;width:1.00px;height:356.04px;background:rgba(255,255,255,.22);"></div>
<div class="b" style="left:956.90px;top:135.72px;width:1.00px;height:356.04px;background:rgba(255,255,255,.22);"></div>
<div class="b" style="left:1021.20px;top:135.72px;width:1.00px;height:356.04px;background:rgba(255,255,255,.22);"></div>
<div class="b" style="left:292.50px;top:153.02px;width:11.10px;height:1.00px;background:#f1f1f1;"></div>
<div class="b" style="left:303.60px;top:153.02px;width:246.00px;height:1.00px;background:rgba(255,255,255,.16);"></div>
<div class="b" style="left:292.50px;top:170.82px;width:11.10px;height:1.00px;background:#f1f1f1;"></div>
<div class="b" style="left:303.60px;top:170.82px;width:246.00px;height:1.00px;background:rgba(255,255,255,.16);"></div>
<div class="b" style="left:292.50px;top:188.63px;width:11.10px;height:1.00px;background:#f1f1f1;"></div>
<div class="b" style="left:303.60px;top:188.63px;width:246.00px;height:1.00px;background:rgba(255,255,255,.16);"></div>
<div class="b" style="left:292.50px;top:206.43px;width:11.10px;height:1.00px;background:#f1f1f1;"></div>
<div class="b" style="left:303.60px;top:206.43px;width:246.00px;height:1.00px;background:rgba(255,255,255,.16);"></div>
<div class="b" style="left:292.50px;top:224.23px;width:11.10px;height:1.00px;background:#f1f1f1;"></div>
<div class="b" style="left:303.60px;top:224.23px;width:246.00px;height:1.00px;background:rgba(255,255,255,.16);"></div>
<div class="b" style="left:292.50px;top:242.03px;width:11.10px;height:1.00px;background:#f1f1f1;"></div>
<div class="b" style="left:303.60px;top:242.03px;width:246.00px;height:1.00px;background:rgba(255,255,255,.16);"></div>
<div class="b" style="left:292.50px;top:259.83px;width:11.10px;height:1.00px;background:#f1f1f1;"></div>
<div class="b" style="left:303.60px;top:259.83px;width:246.00px;height:1.00px;background:rgba(255,255,255,.16);"></div>
<div class="b" style="left:292.50px;top:277.64px;width:11.10px;height:1.00px;background:#f1f1f1;"></div>
<div class="b" style="left:303.60px;top:277.64px;width:246.00px;height:1.00px;background:rgba(255,255,255,.16);"></div>
<div class="b" style="left:292.50px;top:295.44px;width:11.10px;height:1.00px;background:#f1f1f1;"></div>
<div class="b" style="left:303.60px;top:295.44px;width:246.00px;height:1.00px;background:rgba(255,255,255,.16);"></div>
<div class="b" style="left:292.50px;top:313.24px;width:11.10px;height:1.00px;background:#f1f1f1;"></div>
<div class="b" style="left:303.60px;top:313.24px;width:246.00px;height:1.00px;background:rgba(255,255,255,.16);"></div>
<div class="b" style="left:292.50px;top:331.04px;width:11.10px;height:1.00px;background:#f1f1f1;"></div>
<div class="b" style="left:303.60px;top:331.04px;width:246.00px;height:1.00px;background:rgba(255,255,255,.16);"></div>
<div class="b" style="left:292.50px;top:348.84px;width:11.10px;height:1.00px;background:#f1f1f1;"></div>
<div class="b" style="left:303.60px;top:348.84px;width:246.00px;height:1.00px;background:rgba(255,255,255,.16);"></div>
<div class="b" style="left:292.50px;top:366.65px;width:11.10px;height:1.00px;background:#f1f1f1;"></div>
<div class="b" style="left:303.60px;top:366.65px;width:246.00px;height:1.00px;background:rgba(255,255,255,.16);"></div>
<div class="b" style="left:292.50px;top:384.45px;width:11.10px;height:1.00px;background:#f1f1f1;"></div>
<div class="b" style="left:303.60px;top:384.45px;width:246.00px;height:1.00px;background:rgba(255,255,255,.16);"></div>
<div class="b" style="left:292.50px;top:402.25px;width:11.10px;height:1.00px;background:#f1f1f1;"></div>
<div class="b" style="left:303.60px;top:402.25px;width:246.00px;height:1.00px;background:rgba(255,255,255,.16);"></div>
<div class="b" style="left:292.50px;top:420.05px;width:11.10px;height:1.00px;background:#f1f1f1;"></div>
<div class="b" style="left:303.60px;top:420.05px;width:246.00px;height:1.00px;background:rgba(255,255,255,.16);"></div>
<div class="b" style="left:292.50px;top:437.85px;width:11.10px;height:1.00px;background:#f1f1f1;"></div>
<div class="b" style="left:303.60px;top:437.85px;width:246.00px;height:1.00px;background:rgba(255,255,255,.16);"></div>
<div class="b" style="left:292.50px;top:455.66px;width:11.10px;height:1.00px;background:#f1f1f1;"></div>
<div class="b" style="left:303.60px;top:455.66px;width:246.00px;height:1.00px;background:rgba(255,255,255,.16);"></div>
<div class="b" style="left:292.50px;top:473.46px;width:11.10px;height:1.00px;background:#f1f1f1;"></div>
<div class="b" style="left:303.60px;top:473.46px;width:246.00px;height:1.00px;background:rgba(255,255,255,.16);"></div>
<div class="b" style="left:292.50px;top:491.26px;width:11.10px;height:1.00px;background:#f1f1f1;"></div>
<div class="b" style="left:549.00px;top:121.30px;width:1.50px;height:382.96px;background:#adbbca;"></div>
<div class="b" style="left:383.40px;top:136.22px;width:165.80px;height:16.80px;background:#e8eef7;"></div>
<div class="t" style="left:384.60px;top:135.12px;font-size:12.36px;color:#1a1a1a;">Wage and Salary Postings</div>
<svg class="b" style="left:383.00px;top:135.72px;" width="6" height="18" viewBox="0 0 6 18"><path d="M5.400 0.900H0.700V5.200M0.700 12.400V17.300H5.400" fill="none" stroke="#427cac" stroke-width="1"/></svg>
<svg class="b" style="left:544.00px;top:135.72px;" width="6" height="18" viewBox="0 0 6 18"><path d="M0.600 0.900H5.300V5.200M5.300 12.400V17.300H0.600" fill="none" stroke="#427cac" stroke-width="1"/></svg>
<div class="b" style="left:550.60px;top:493.00px;width:480.40px;height:9.60px;background:#bcbcbc;"></div>
<div class="b" style="left:798.500px;top:470.100px;width:40.800px;height:21.300px;box-sizing:border-box;border:2px solid #ee3f49;box-shadow:0 1px 2px rgba(0,0,0,.4), inset 0 0 1px rgba(232,67,76,.5)"></div>
<svg class="b" style="left:818.00px;top:476.10px;" width="15" height="15" viewBox="0 0 15 15"><circle cx="7.500" cy="7.500" r="6.300" fill="none" stroke="#3f8f3f" stroke-width="1.100"/><path d="M4.700 7.900l2 2 3.700-4.400" fill="none" stroke="#1d7a23" stroke-width="1.700" stroke-linecap="butt" stroke-linejoin="miter"/></svg>
<div class="b" style="left:286.70px;top:504.50px;width:789.30px;height:5.50px;background:#dcdcdc;"></div>
<svg class="b" style="left:742.00px;top:505.00px;" width="22" height="5" viewBox="742 505 22 5"><rect x="744.20" y="506.300" width="2.200" height="2.300" rx="0.400" fill="#124f8b"/><rect x="748.70" y="506.300" width="2.200" height="2.300" rx="0.400" fill="#124f8b"/><rect x="753.20" y="506.300" width="2.200" height="2.300" rx="0.400" fill="#124f8b"/><rect x="757.70" y="506.300" width="2.200" height="2.300" rx="0.400" fill="#124f8b"/></svg>
<div class="t" style="left:291.80px;top:530.20px;font-size:13.9px;color:#427cac;">Details</div>
<div class="t" style="left:363.40px;top:530.20px;font-size:13.9px;color:#2b2b2b;">Dependencies</div>
<div class="t" style="left:481.20px;top:530.20px;font-size:13.9px;color:#2b2b2b;">Documents</div>
<div class="t" style="left:581.60px;top:530.20px;font-size:13.9px;color:#2b2b2b;">Notes</div>
<div class="t" style="left:647.00px;top:530.20px;font-size:13.9px;color:#2b2b2b;">Messages Sent</div>
<div class="t" style="left:772.60px;top:530.20px;font-size:13.9px;color:#2b2b2b;">Output Logs</div>
<div class="t" style="left:878.40px;top:530.20px;font-size:13.9px;color:#2b2b2b;">Changes</div>
<div class="b" style="left:290.70px;top:555.00px;width:785.30px;height:89.00px;background:#fbfcfe;"></div>
<div class="b" style="left:334.90px;top:553.60px;width:741.10px;height:1.40px;background:#e2e9f2;"></div>
<div class="b" style="left:291.60px;top:552.80px;width:43.30px;height:2.20px;background:#5ba3d2;"></div>
<div class="b" style="left:299.60px;top:585.00px;width:776.40px;height:59.00px;background:#eff4f9;"></div>
</div></body></html>
